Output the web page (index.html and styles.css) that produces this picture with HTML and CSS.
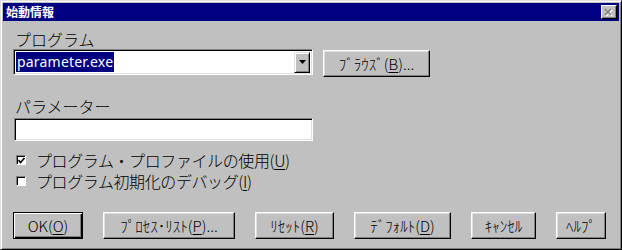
FILE: index.html
```html
<!DOCTYPE html>
<html lang="ja">
<head>
    <meta charset="UTF-8">
    <title>始動情報</title>
    <link rel="stylesheet" href="styles.css">
</head>
<body>
    <div class="window">
        <div class="titlebar">
            <span class="title">始動情報</span>
            <span class="close">
                <svg width="10" height="9" viewBox="0 0 10 9">
                    <path d="M2 2 L8 8 M8 2 L2 8" stroke="#fff" stroke-width="1.6"/>
                    <path d="M1 1 L7 7 M7 1 L1 7" stroke="#808080" stroke-width="1.6"/>
                </svg>
            </span>
        </div>
        <div class="content">
            <div class="label">プログラム</div>
            <div class="row">
                <div class="combo">
                    <span class="selected">parameter.exe</span>
                    <span class="drop">
                        <svg width="7" height="4" viewBox="0 0 7 4"><path d="M0 0 H7 L3.5 4 Z" fill="#000"/></svg>
                    </span>
                </div>
                <div class="btn browse">ﾌﾞﾗｳｽﾞ(<u>B</u>)...</div>
            </div>

            <div class="label param">パラメーター</div>
            <div class="field"></div>

            <div class="check first">
                <span class="box">
                    <svg width="7" height="7" viewBox="0 0 7 7"><path d="M0.5 3 L2.5 5.5 L6.5 1" stroke="#000" stroke-width="1.6" fill="none"/></svg>
                </span>
                <span class="check-text">プログラム・プロファイルの使用(<u>U</u>)</span>
            </div>
            <div class="check">
                <span class="box"></span>
                <span class="check-text">プログラム初期化のデバッグ(<u>I</u>)</span>
            </div>

            <div class="buttons">
                <div class="btn default w-ok">OK(<u>O</u>)</div>
                <div class="btn w-proc">ﾌﾟﾛｾｽ･ﾘｽﾄ(<u>P</u>)...</div>
                <div class="btn w-reset">ﾘｾｯﾄ(<u>R</u>)</div>
                <div class="btn w-def">ﾃﾞﾌｫﾙﾄ(<u>D</u>)</div>
                <div class="btn w-cancel">ｷｬﾝｾﾙ</div>
                <div class="btn w-help">ﾍﾙﾌﾟ</div>
            </div>
        </div>
    </div>
</body>
</html>
```

FILE: styles.css
```css
body {
    margin: 0;
    background: #c0c0c0;
    font-family: "Noto Sans CJK JP", "DejaVu Sans", sans-serif;
    color: #000;
}
.window {
    width: 622px;
    height: 250px;
    box-sizing: border-box;
    background: #c0c0c0;
    border: 1px solid;
    border-color: #dfdfdf #000 #000 #dfdfdf;
    box-shadow: inset 1px 1px #fff, inset -1px -1px #808080;
    padding: 2px;
}
.titlebar {
    height: 18px;
    background: #000080;
    display: flex;
    align-items: center;
    justify-content: space-between;
    padding: 0 2px 0 3px;
}
.title {
    color: #fff;
    font-size: 12px;
    font-weight: bold;
    line-height: 18px;
}
.close {
    width: 16px;
    height: 14px;
    box-sizing: border-box;
    background: #c0c0c0;
    border: 1px solid;
    border-color: #fff #000 #000 #fff;
    box-shadow: inset -1px -1px #808080;
    display: flex;
    align-items: center;
    justify-content: center;
}
.content {
    padding: 9px 0 0 10px;
}
.label {
    font-size: 16px;
    font-weight: 300;
    line-height: 18px;
    padding-left: 2px;
}
.label.param {
    margin-top: 20px;
}
.row {
    display: flex;
    align-items: flex-start;
    margin-top: 1px;
}
.combo {
    width: 300px;
    height: 26px;
    box-sizing: border-box;
    background: #fff;
    border: 1px solid;
    border-color: #808080 #fff #fff #808080;
    box-shadow: inset 1px 1px #000, inset -1px -1px #dfdfdf;
    display: flex;
    align-items: center;
    justify-content: space-between;
    padding: 0 2px 0 2px;
}
.selected {
    background: #000080;
    color: #fff;
    font-family: "Noto Sans", "DejaVu Sans", sans-serif;
    font-size: 14px;
    line-height: 20px;
    padding: 0 1px;
    letter-spacing: 0.2px;
}
.drop {
    width: 16px;
    height: 21px;
    box-sizing: border-box;
    background: #c0c0c0;
    border: 1px solid;
    border-color: #dfdfdf #000 #000 #dfdfdf;
    box-shadow: inset 1px 1px #fff, inset -1px -1px #808080;
    display: flex;
    align-items: center;
    justify-content: center;
}
.btn {
    height: 27px;
    box-sizing: border-box;
    background: #c0c0c0;
    border: 1px solid;
    border-color: #fff #000 #000 #fff;
    box-shadow: inset -1px -1px #808080, inset 1px 1px #dfdfdf;
    display: flex;
    align-items: center;
    justify-content: center;
    font-size: 15px;
    font-weight: 300;
    white-space: nowrap;
}
.btn u {
    text-underline-offset: 2px;
}
.browse {
    width: 107px;
    margin-left: 10px;
    margin-top: 1px;
}
.field {
    width: 299px;
    height: 23px;
    margin: 3px 0 0 1px;
    box-sizing: border-box;
    background: #fff;
    border: 1px solid;
    border-color: #808080 #fff #fff #808080;
    box-shadow: inset 1px 1px #000, inset -1px -1px #dfdfdf;
}
.check {
    display: flex;
    align-items: center;
    gap: 10px;
    height: 20px;
    margin-top: 1px;
    padding-left: 3px;
}
.check-text {
    font-size: 16px;
    font-weight: 300;
    line-height: 20px;
    letter-spacing: -0.4px;
}
.check.first {
    margin-top: 9px;
}
.check u {
    text-underline-offset: 2px;
}
.box {
    width: 10px;
    height: 10px;
    box-sizing: border-box;
    background: #fff;
    border: 1px solid;
    border-color: #808080 #fff #fff #808080;
    box-shadow: inset 1px 1px #000;
    display: flex;
    align-items: center;
    justify-content: center;
}
.buttons {
    display: flex;
    gap: 20px;
    margin-top: 21px;
}
.btn.default {
    border: 1px solid #000;
    box-shadow: inset 1px 1px #fff, inset -1px -1px #000, inset -2px -2px #808080;
}
.w-ok { width: 70px; }
.w-proc { width: 132px; }
.w-reset { width: 79px; }
.w-def { width: 97px; }
.w-cancel { width: 65px; }
.w-help { width: 50px; }
```
